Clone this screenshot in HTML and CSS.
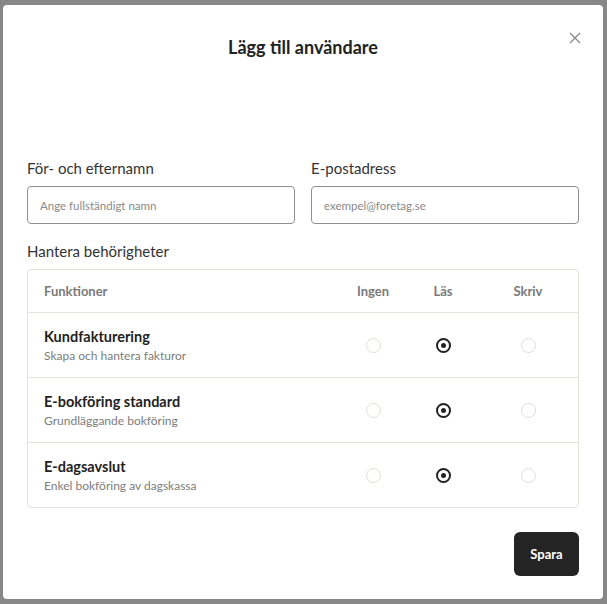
FILE: index.html
```html
<!DOCTYPE html>
<html lang="sv">
<head>
    <meta charset="UTF-8">
    <meta name="viewport" content="width=device-width, initial-scale=1.0">
    <title>Lägg till användare</title>
    <link rel="stylesheet" href="styles.css">
</head>
<body>
    <div class="modal">
        <div class="modal-header">
            <h2>Lägg till användare</h2>
            <button class="close-btn" aria-label="Stäng">
                <svg width="12" height="12" viewBox="0 0 12 12"><path d="M1 1 L11 11 M11 1 L1 11" stroke="#8a8a8a" stroke-width="1.3" fill="none"/></svg>
            </button>
        </div>

        <div class="field-row">
            <div class="field">
                <label>För- och efternamn</label>
                <input type="text" placeholder="Ange fullständigt namn">
            </div>
            <div class="field">
                <label>E-postadress</label>
                <input type="email" placeholder="exempel@foretag.se">
            </div>
        </div>

        <div class="section-label">Hantera behörigheter</div>

        <div class="perm-table">
            <div class="perm-row perm-head">
                <div class="col-name">Funktioner</div>
                <div class="col-opt">Ingen</div>
                <div class="col-opt">Läs</div>
                <div class="col-opt">Skriv</div>
            </div>
            <div class="perm-row">
                <div class="col-name">
                    <div class="perm-title">Kundfakturering</div>
                    <div class="perm-desc">Skapa och hantera fakturor</div>
                </div>
                <div class="col-opt"><span class="radio"></span></div>
                <div class="col-opt"><span class="radio checked"></span></div>
                <div class="col-opt"><span class="radio"></span></div>
            </div>
            <div class="perm-row">
                <div class="col-name">
                    <div class="perm-title">E-bokföring standard</div>
                    <div class="perm-desc">Grundläggande bokföring</div>
                </div>
                <div class="col-opt"><span class="radio"></span></div>
                <div class="col-opt"><span class="radio checked"></span></div>
                <div class="col-opt"><span class="radio"></span></div>
            </div>
            <div class="perm-row">
                <div class="col-name">
                    <div class="perm-title">E-dagsavslut</div>
                    <div class="perm-desc">Enkel bokföring av dagskassa</div>
                </div>
                <div class="col-opt"><span class="radio"></span></div>
                <div class="col-opt"><span class="radio checked"></span></div>
                <div class="col-opt"><span class="radio"></span></div>
            </div>
        </div>

        <div class="modal-footer">
            <button class="save-btn">Spara</button>
        </div>
    </div>
</body>
</html>
```

FILE: styles.css
```css
body { margin: 0; padding: 5px 4px 5px 3px; background: #878787; font-family: Lato, "Open Sans", sans-serif; color: #333; }

.modal { position: relative; width: 600px; height: 594px; box-sizing: border-box; background: #fff; border-radius: 4px; padding: 0 24px; }
.modal-header { padding-top: 30px; height: 153px; box-sizing: border-box; text-align: center; }
.modal-header h2 { margin: 0; font-size: 18px; line-height: 24px; font-weight: 700; color: #222; }
.close-btn { position: absolute; top: 26px; right: 21px; width: 14px; height: 14px; padding: 0; border: none; background: none; cursor: pointer; display: flex; align-items: center; justify-content: center; }

.field-row { display: grid; grid-template-columns: 1fr 1fr; gap: 16px; }
.field label { display: block; font-size: 15px; line-height: 20px; color: #333; margin-bottom: 8px; }
.field input { width: 100%; box-sizing: border-box; height: 38px; border: 1px solid #8f8f8f; border-radius: 4px; padding: 0 12px; font-family: inherit; font-size: 11.5px; color: #333; }
.field input::placeholder { color: #8a8a8a; }

.section-label { margin-top: 17px; margin-bottom: 8px; font-size: 15px; line-height: 20px; color: #333; }

.perm-table { border: 1px solid #e6e3dc; border-radius: 4px; }
.perm-row { display: grid; grid-template-columns: 310px 70px 70px 100px; height: 64px; align-items: center; border-bottom: 1px solid #e6e3dc; }
.perm-row:last-child { border-bottom: none; }
.perm-head { height: 42px; font-size: 13px; font-weight: 700; color: #7a7a7a; }
.col-name { padding-left: 16px; }
.col-opt { display: flex; justify-content: center; }

.perm-title { font-size: 14.5px; font-weight: 700; color: #222; line-height: 19px; }
.perm-desc { font-size: 12px; color: #7d7d7d; line-height: 17px; margin-top: 1px; }

.radio { width: 15px; height: 15px; box-sizing: border-box; border-radius: 50%; border: 1.5px solid #e2ded6; background: #fff; }
.radio.checked { border: 2px solid #222; position: relative; }
.radio.checked::after { content: ""; position: absolute; left: 50%; top: 50%; width: 5px; height: 5px; margin: -2.5px 0 0 -2.5px; border-radius: 50%; background: #222; }

.modal-footer { display: flex; justify-content: flex-end; margin-top: 24px; }
.save-btn { width: 65px; height: 44px; border: none; border-radius: 6px; background: #242424; color: #fff; font-family: inherit; font-size: 13px; font-weight: 700; cursor: pointer; }
```
